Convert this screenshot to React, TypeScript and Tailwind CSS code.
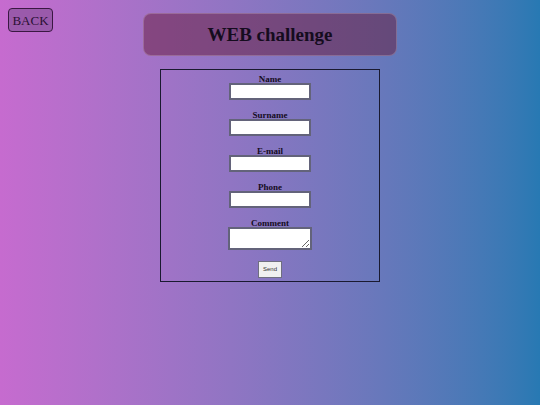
const fields = ["Name", "Surname", "E-mail", "Phone"];

export default function App() {
  return (
    <div className="relative min-h-[405px] w-full bg-gradient-to-r from-[#c66bcf] to-[#2779b3] font-['Liberation_Serif',serif] text-[#150c22]">
      <button className="absolute left-[8px] top-[8px] h-[24px] w-[45px] rounded-[4px] border-[1.5px] border-[#3a1842] bg-[#9a5aab] pt-[1px] text-[13px] leading-none text-[#2a1034]">
        BACK
      </button>
      <div className="flex flex-col items-center pt-[13px]">
        <header className="flex h-[43px] w-[254px] items-center justify-center rounded-[8px] border border-white/20 bg-[#661a3a]/50 pt-[2px]">
          <h1 className="text-[19px] font-bold text-[#150c1e]">WEB challenge</h1>
        </header>
        <form className="mt-[13px] flex h-[213px] w-[220px] flex-col items-center border border-[#1a1a30] pt-[4px]">
          {fields.map((f) => (
            <div key={f} className="mb-[10px] flex flex-col items-center">
              <label className="h-[9px] text-[9px] font-bold leading-[11px]">{f}</label>
              <input className="h-[17px] w-[82px] border-2 border-[#63637a] bg-white" />
            </div>
          ))}
          <div className="flex flex-col items-center">
            <label className="h-[9px] text-[9px] font-bold leading-[11px]">Comment</label>
            <textarea className="h-[23px] w-[84px] resize-y border-2 border-[#63637a] bg-white" />
          </div>
          <button
            type="button"
            className="mt-[11px] h-[17px] w-[24px] border border-[#6f6f80] bg-[#f0f0f0] font-['Liberation_Sans',sans-serif] text-[6px] text-[#333]"
          >
            Send
          </button>
        </form>
      </div>
    </div>
  );
}
